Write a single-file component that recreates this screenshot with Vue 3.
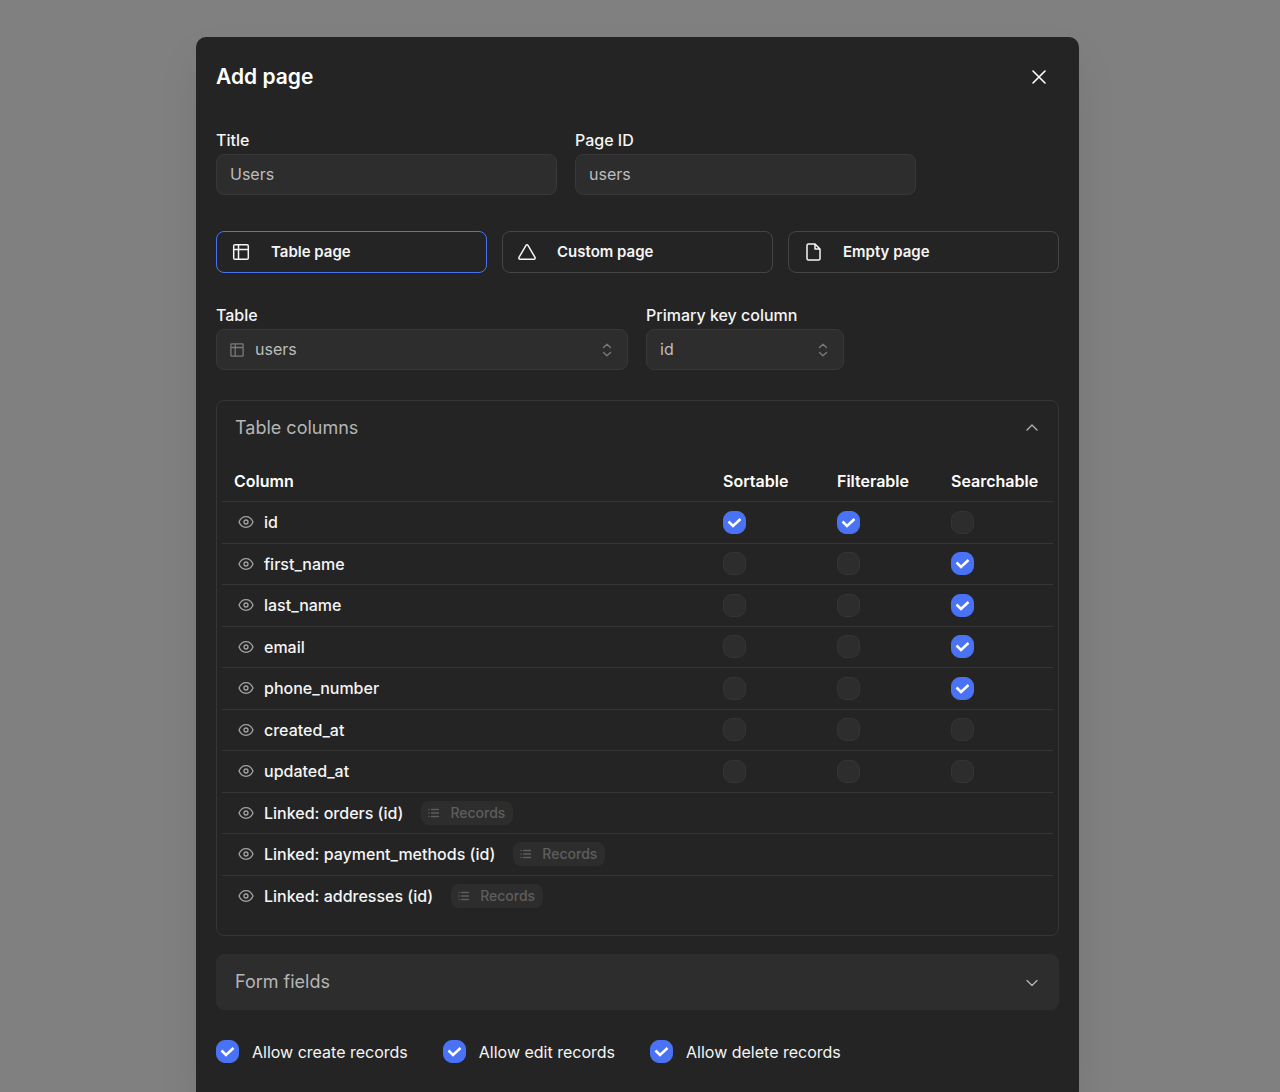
<template>
  <div class="overlay">
    <div class="modal" role="dialog" aria-labelledby="modal-title">
      <header class="modal-header">
        <h2 id="modal-title" class="modal-title">Add page</h2>
        <button class="close-btn" type="button" aria-label="Close">
          <svg width="16" height="16" viewBox="0 0 16 16"><path d="M2 2l12 12M14 2L2 14" /></svg>
        </button>
      </header>

      <div class="field-row">
        <div class="field field-text">
          <label for="title">Title</label>
          <input id="title" v-model="title" class="control" type="text" />
        </div>
        <div class="field field-text">
          <label for="page-id">Page ID</label>
          <input id="page-id" v-model="pageId" class="control" type="text" />
        </div>
      </div>

      <div class="page-types">
        <button
          v-for="type in pageTypes"
          :key="type.id"
          type="button"
          class="page-type"
          :class="{ active: type.id === pageType }"
          :aria-pressed="type.id === pageType"
          @click="pageType = type.id"
        >
          <svg width="20" height="20" viewBox="0 0 20 20"><path :d="type.icon" /></svg>
          <span>{{ type.text }}</span>
        </button>
      </div>

      <div class="field-row">
        <div class="field field-table">
          <label for="table">Table</label>
          <div class="select-wrap">
            <svg class="select-icon" width="14" height="14" viewBox="0 0 14 14"><path d="M1.500 .9h11a.6.6 0 0 1 .6.6v11a.6.6 0 0 1-.6.6h-11a.6.6 0 0 1-.6-.6v-11a.6.6 0 0 1 .6-.6zM1 4.500h12M5.200 1v12" /></svg>
            <select id="table" v-model="table" class="control with-icon">
              <option>users</option>
              <option>orders</option>
              <option>payment_methods</option>
              <option>addresses</option>
            </select>
            <svg class="select-arrows" width="10" height="14" viewBox="0 0 10 14"><path d="M1.500 4.500L5 1.200l3.500 3.300M1.500 9.500L5 12.800l3.500-3.300" /></svg>
          </div>
        </div>
        <div class="field field-key">
          <label for="primary-key">Primary key column</label>
          <div class="select-wrap">
            <select id="primary-key" v-model="primaryKey" class="control">
              <option v-for="column in columns" :key="column.name">{{ column.name }}</option>
            </select>
            <svg class="select-arrows" width="10" height="14" viewBox="0 0 10 14"><path d="M1.500 4.500L5 1.200l3.500 3.300M1.500 9.500L5 12.800l3.500-3.300" /></svg>
          </div>
        </div>
      </div>

      <section class="panel">
        <button class="panel-header" type="button" aria-expanded="true">
          <span>Table columns</span>
          <svg width="12" height="12" viewBox="0 0 12 12"><path d="M1 8l5-5 5 5" /></svg>
        </button>
        <table class="columns-table">
          <thead>
            <tr>
              <th>Column</th>
              <th v-for="flag in flags" :key="flag.key" class="flag-col">{{ flag.text }}</th>
            </tr>
          </thead>
          <tbody>
            <tr v-for="column in columns" :key="column.name">
              <td>
                <div class="column-name">
                  <svg class="eye" width="16" height="16" viewBox="0 0 16 16"><path :d="eyeIcon" /></svg>
                  <span>{{ column.name }}</span>
                </div>
              </td>
              <td v-for="flag in flags" :key="flag.key">
                <span class="check">
                  <input v-model="column[flag.key]" type="checkbox" :aria-label="`${column.name} ${flag.text}`" />
                  <svg width="15" height="11" viewBox="0 0 15 11"><path d="M1.500 4.500L6 9l7.500-7" /></svg>
                </span>
              </td>
            </tr>
            <tr v-for="link in links" :key="link">
              <td colspan="4">
                <div class="column-name">
                  <svg class="eye" width="16" height="16" viewBox="0 0 16 16"><path :d="eyeIcon" /></svg>
                  <span>Linked: {{ link }} (id)</span>
                  <span class="records">
                    <svg width="12" height="12" viewBox="0 0 12 12"><path d="M3.500 2.500h7M3.500 6h7M3.500 9.500h7M1 2.500h.1M1 6h.1M1 9.500h.1" /></svg>
                    Records
                  </span>
                </div>
              </td>
            </tr>
          </tbody>
        </table>
      </section>

      <section class="panel collapsed">
        <button class="panel-header" type="button" aria-expanded="false">
          <span>Form fields</span>
          <svg width="12" height="12" viewBox="0 0 12 12"><path d="M1 4.500l5 5 5-5" /></svg>
        </button>
      </section>

      <div class="permissions">
        <label v-for="permission in permissions" :key="permission.text">
          <span class="check">
            <input v-model="permission.allowed" type="checkbox" />
            <svg width="15" height="11" viewBox="0 0 15 11"><path d="M1.500 4.500L6 9l7.500-7" /></svg>
          </span>
          {{ permission.text }}
        </label>
      </div>
    </div>
  </div>
</template>

<script setup>
import { ref } from "vue";

const title = ref("Users");
const pageId = ref("users");
const pageType = ref("table");
const table = ref("users");
const primaryKey = ref("id");

const pageTypes = [
  { id: "table", text: "Table page", icon: "M4 2.700h12a1.300 1.300 0 0 1 1.300 1.300v12a1.300 1.300 0 0 1-1.300 1.300H4A1.300 1.300 0 0 1 2.700 16V4A1.300 1.300 0 0 1 4 2.700zM3 7.500h14M7.500 3v14" },
  { id: "custom", text: "Custom page", icon: "M9 3.300L2 15.400A1.200 1.200 0 0 0 3 17.200h14a1.200 1.200 0 0 0 1-1.800L11 3.300a1.200 1.200 0 0 0-2 0z" },
  { id: "empty", text: "Empty page", icon: "M12 2H5.500A1.500 1.500 0 0 0 4 3.500v13A1.500 1.500 0 0 0 5.500 18h10a1.500 1.500 0 0 0 1.500-1.500V7zM12 2v5h5" },
];

const eyeIcon = "M1 8C2.500 4.500 5 2.700 8 2.700s5.500 1.800 7 5.300c-1.500 3.500-4 5.300-7 5.300S2.500 11.500 1 8zM10 8a2 2 0 1 1-4 0a2 2 0 1 1 4 0z";

const flags = [
  { key: "sortable", text: "Sortable" },
  { key: "filterable", text: "Filterable" },
  { key: "searchable", text: "Searchable" },
];

const columns = ref([
  { name: "id", sortable: true, filterable: true, searchable: false },
  { name: "first_name", sortable: false, filterable: false, searchable: true },
  { name: "last_name", sortable: false, filterable: false, searchable: true },
  { name: "email", sortable: false, filterable: false, searchable: true },
  { name: "phone_number", sortable: false, filterable: false, searchable: true },
  { name: "created_at", sortable: false, filterable: false, searchable: false },
  { name: "updated_at", sortable: false, filterable: false, searchable: false },
]);

const links = ["orders", "payment_methods", "addresses"];

const permissions = ref([
  { text: "Allow create records", allowed: true },
  { text: "Allow edit records", allowed: true },
  { text: "Allow delete records", allowed: true },
]);
</script>

<style>
body {
  background: #808080;
}
</style>

<style scoped>
* {
  box-sizing: border-box;
}

.overlay {
  display: flex;
  justify-content: center;
  min-height: 100vh;
  padding: 37px 5px 0 0;
  font-family: Inter, "Liberation Sans", sans-serif;
  font-size: 16px;
  line-height: 20px;
  color: #f5f5f5;
}

.modal {
  width: 100%;
  max-width: 883px;
  padding: 20px 20px 28px;
  background: #242424;
  border-radius: 10px 10px 0 0;
  box-shadow: 0 20px 40px rgba(0, 0, 0, 0.08);
}

button,
input,
select {
  margin: 0;
  font: inherit;
  color: inherit;
}

svg {
  flex: none;
  fill: none;
  stroke: currentColor;
  stroke-width: 1.3;
  stroke-linecap: round;
  stroke-linejoin: round;
}

.modal-header {
  display: flex;
  align-items: center;
  justify-content: space-between;
  height: 40px;
  margin-bottom: 33px;
}

.modal-title {
  margin: 0;
  font-size: 21px;
  line-height: 28px;
  font-weight: 600;
  color: #fff;
}

.close-btn {
  display: flex;
  align-items: center;
  justify-content: center;
  width: 40px;
  height: 40px;
  padding: 0;
  background: none;
  border: none;
  color: #fff;
  cursor: pointer;
}

.close-btn svg {
  stroke-width: 1.6;
}

.field-row {
  display: flex;
  gap: 18px;
}

.field {
  display: flex;
  flex-direction: column;
  gap: 4px;
  min-width: 0;
}

.field label {
  font-weight: 500;
}

.field-text {
  flex: 0 1 341px;
}

.field-table {
  flex: 0 1 412px;
}

.field-key {
  flex: 0 1 198px;
}

.control {
  appearance: none;
  width: 100%;
  height: 41px;
  padding: 0 13px 2px;
  background: #2d2d2d;
  border: 1px solid #383838;
  border-radius: 8px;
  color: #bdbdbd;
}

.control.with-icon {
  padding-left: 38px;
}

.select-wrap {
  position: relative;
  color: #7a7a7a;
}

.select-icon {
  position: absolute;
  top: 14px;
  left: 14px;
}

.select-arrows {
  position: absolute;
  top: 14px;
  right: 16px;
}

.page-types {
  display: grid;
  grid-template-columns: repeat(3, 1fr);
  gap: 15px;
  margin: 36px 0 32px;
}

.page-type {
  display: flex;
  align-items: center;
  gap: 20px;
  height: 42px;
  padding: 0 14px;
  background: none;
  border: 1px solid #454545;
  border-radius: 8px;
  font-size: 15px;
  font-weight: 600;
  cursor: pointer;
}

.page-type svg {
  stroke-width: 1.5;
}

.page-type.active {
  border-color: #4a72f5;
}

.panel {
  margin-top: 30px;
  padding: 0 5px 18px;
  border: 1px solid #353535;
  border-radius: 8px;
}

.panel-header {
  display: flex;
  align-items: center;
  justify-content: space-between;
  width: 100%;
  height: 54px;
  padding: 0 15px 0 13px;
  background: none;
  border: none;
  font-size: 18px;
  color: #b5b5b5;
  cursor: pointer;
}

.panel.collapsed {
  margin-top: 18px;
  padding-bottom: 0;
  background: #2d2d2d;
  border-color: #2d2d2d;
}

.columns-table {
  width: 100%;
  height: 462px;
  border-collapse: separate;
  border-spacing: 0;
  text-align: left;
}

.columns-table th {
  height: 47px;
  padding: 5px 0 0 12px;
  border-bottom: 1px solid #353535;
  font-weight: 600;
  color: #fff;
}

.flag-col {
  width: 114px;
}

.columns-table td {
  height: 41px;
  padding: 0 0 0 12px;
  border-bottom: 1px solid #353535;
  font-weight: 500;
}

.columns-table tr:last-child td {
  border-bottom: none;
}

.column-name {
  display: flex;
  align-items: center;
  gap: 10px;
  padding-left: 4px;
}

.eye {
  color: #a3a3a3;
}

.records {
  display: flex;
  align-items: center;
  gap: 10px;
  height: 24px;
  margin-left: 8px;
  padding: 0 8px 0 7px;
  background: #2d2d2d;
  border-radius: 8px;
  font-size: 14px;
  font-weight: 500;
  color: #5e5e5e;
}

.check {
  position: relative;
  display: flex;
  width: 23px;
  height: 23px;
}

.check input {
  appearance: none;
  width: 23px;
  height: 23px;
  background: #2d2d2d;
  border: 1px solid #353535;
  border-radius: 9px;
  cursor: pointer;
}

.check input:checked {
  background: #4a72f5;
  border-color: #4a72f5;
}

.check svg {
  position: absolute;
  top: 6px;
  left: 4px;
  color: #fff;
  stroke-width: 2.5;
  stroke-linecap: butt;
  stroke-linejoin: miter;
  visibility: hidden;
  pointer-events: none;
}

.check input:checked + svg {
  visibility: visible;
}

.permissions {
  display: flex;
  flex-wrap: wrap;
  gap: 35px;
  margin-top: 30px;
}

.permissions label {
  display: flex;
  align-items: center;
  gap: 13px;
}
</style>
